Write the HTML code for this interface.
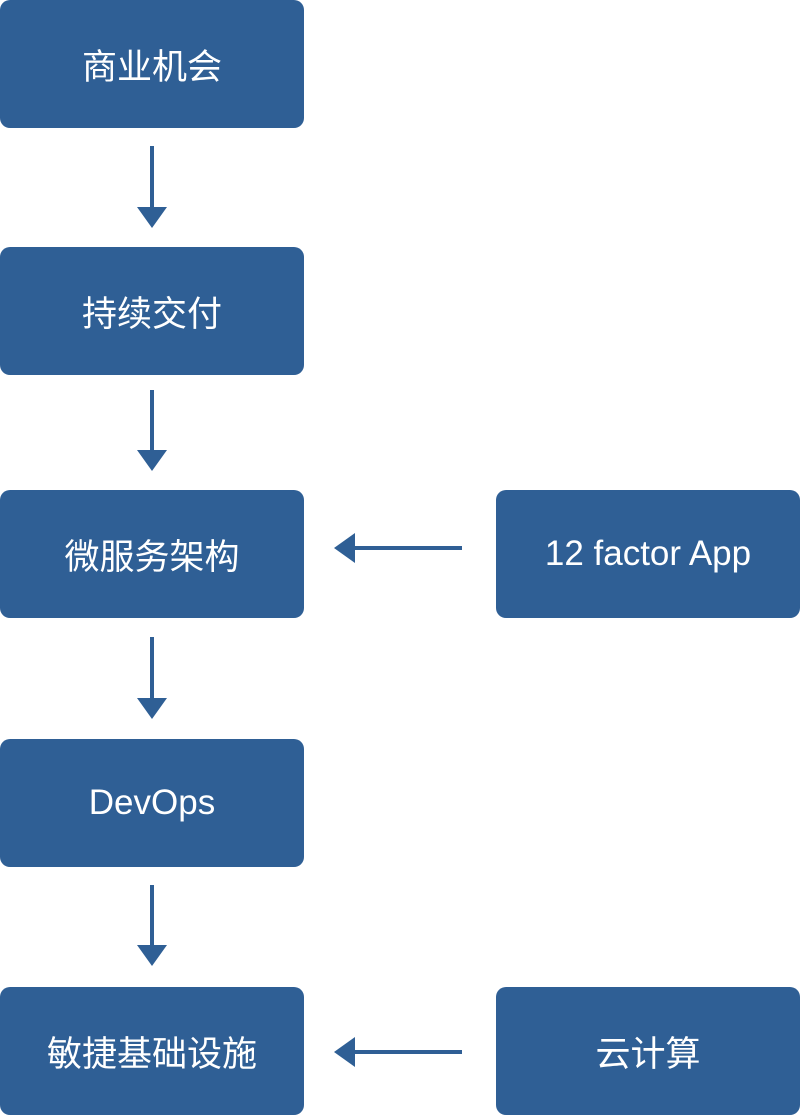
<!DOCTYPE html>
<html><head><meta charset="utf-8"><style>
body{margin:0;width:800px;height:1116px;background:#fff;position:relative;overflow:hidden;font-family:"Liberation Sans","Noto Sans CJK SC",sans-serif}
.b{position:absolute;background:#2f5f95;border-radius:10px;color:#fff;font-size:35px;display:flex;align-items:center;justify-content:center;width:304px;height:128px}
svg{position:absolute;left:0;top:0}
</style></head><body>
<div class="b" style="left:0;top:0">商业机会</div>
<div class="b" style="left:0;top:247px">持续交付</div>
<div class="b" style="left:0;top:490px">微服务架构</div>
<div class="b" style="left:0;top:739px">DevOps</div>
<div class="b" style="left:0;top:987px">敏捷基础设施</div>
<div class="b" style="left:496px;top:490px">12 factor App</div>
<div class="b" style="left:496px;top:987px">云计算</div>
<svg width="800" height="1116">
<g fill="#2f5f95" stroke="#2f5f95">
<line x1="152" y1="146" x2="152" y2="212" stroke-width="4"/><polygon points="137,207 167,207 152,228" stroke="none"/>
<line x1="152" y1="390" x2="152" y2="455" stroke-width="4"/><polygon points="137,450 167,450 152,471" stroke="none"/>
<line x1="152" y1="637" x2="152" y2="703" stroke-width="4"/><polygon points="137,698 167,698 152,719" stroke="none"/>
<line x1="152" y1="885" x2="152" y2="950" stroke-width="4"/><polygon points="137,945 167,945 152,966" stroke="none"/>
<line x1="462" y1="548" x2="350" y2="548" stroke-width="4"/><polygon points="355,533 355,563 334,548" stroke="none"/>
<line x1="462" y1="1052" x2="350" y2="1052" stroke-width="4"/><polygon points="355,1037 355,1067 334,1052" stroke="none"/>
</g></svg>
</body></html>
